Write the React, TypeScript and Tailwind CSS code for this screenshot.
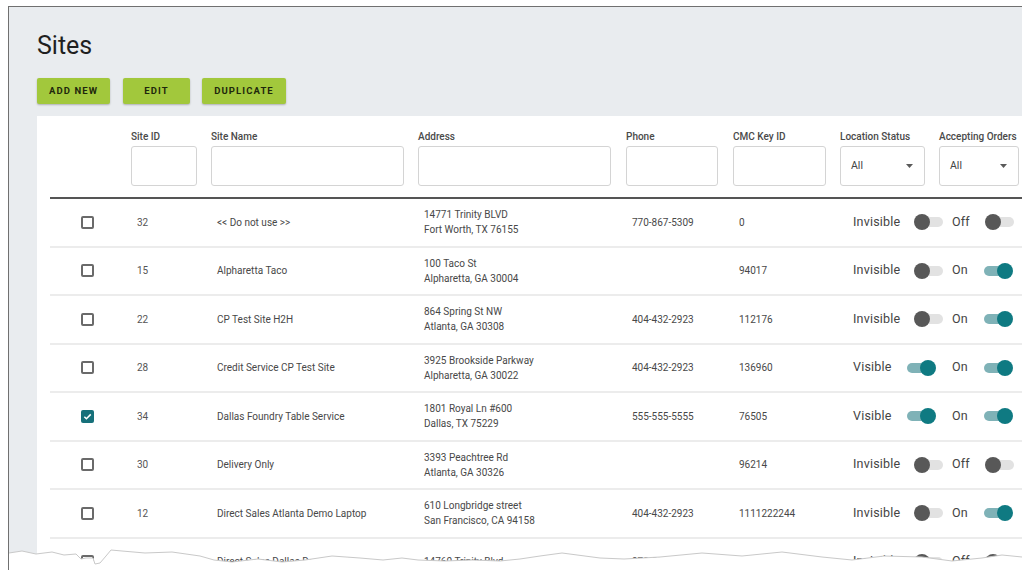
import React from 'react';

type Site = {
  id: string;
  name: string;
  street: string;
  city: string;
  phone: string;
  cmcKey: string;
  visible: boolean;
  accepting: boolean;
  checked?: boolean;
};

const sites: Site[] = [
  { id: '32', name: '<< Do not use >>', street: '14771 Trinity BLVD', city: 'Fort Worth, TX 76155', phone: '770-867-5309', cmcKey: '0', visible: false, accepting: false },
  { id: '15', name: 'Alpharetta Taco', street: '100 Taco St', city: 'Alpharetta, GA 30004', phone: '', cmcKey: '94017', visible: false, accepting: true },
  { id: '22', name: 'CP Test Site H2H', street: '864 Spring St NW', city: 'Atlanta, GA 30308', phone: '404-432-2923', cmcKey: '112176', visible: false, accepting: true },
  { id: '28', name: 'Credit Service CP Test Site', street: '3925 Brookside Parkway', city: 'Alpharetta, GA 30022', phone: '404-432-2923', cmcKey: '136960', visible: true, accepting: true },
  { id: '34', name: 'Dallas Foundry Table Service', street: '1801 Royal Ln #600', city: 'Dallas, TX 75229', phone: '555-555-5555', cmcKey: '76505', visible: true, accepting: true, checked: true },
  { id: '30', name: 'Delivery Only', street: '3393 Peachtree Rd', city: 'Atlanta, GA 30326', phone: '', cmcKey: '96214', visible: false, accepting: false },
  { id: '12', name: 'Direct Sales Atlanta Demo Laptop', street: '610 Longbridge street', city: 'San Francisco, CA 94158', phone: '404-432-2923', cmcKey: '1111222244', visible: false, accepting: true },
  { id: '14', name: 'Direct Sales Dallas Demo Laptop', street: '14760 Trinity Blvd', city: '', phone: '972-555-2305', cmcKey: '3', visible: false, accepting: false },
];

// jagged bottom edge of the clipped page
const tearEdge: [number, number][] = [
  [9, 553], [22, 551], [36, 554], [52, 552], [64, 555], [76, 554], [81, 559], [86, 558], [93, 558], [95, 564],
  [100, 563], [106, 556], [111, 550], [122, 551], [145, 553], [172, 552], [200, 556], [214, 560], [232, 562],
  [258, 559], [282, 562], [305, 560], [332, 556], [360, 558], [383, 560], [402, 558], [418, 560], [445, 561],
  [472, 560], [500, 561], [520, 559], [540, 556], [562, 553], [600, 558], [624, 559], [660, 557], [702, 553],
  [742, 556], [782, 552], [822, 557], [852, 560], [884, 556], [922, 557], [952, 561], [982, 558], [1002, 555],
  [1022, 557],
];

function Checkbox({ checked }: { checked?: boolean }) {
  if (checked) {
    return (
      <div className="w-[13px] h-[13px] rounded-[2px] bg-[#16707a] flex items-center justify-center">
        <svg width="9" height="9" viewBox="0 0 10 10">
          <path d="M1.5 5.2l2.3 2.3L8.6 2.6" fill="none" stroke="#fff" strokeWidth="1.7" />
        </svg>
      </div>
    );
  }
  return <div className="w-[13px] h-[13px] rounded-[2px] border-2 border-[#6a6a6a]" />;
}

function Toggle({ on }: { on: boolean }) {
  return (
    <div className="relative w-[30px] h-[16px] shrink-0">
      <div className={`absolute left-[1px] right-[1px] top-[3px] h-[10px] rounded-full ${on ? 'bg-[#7fb2b7]' : 'bg-[#e2e2e2]'}`} />
      <div className={`absolute top-0 w-[16px] h-[16px] rounded-full ${on ? 'right-0 bg-[#0f7a82]' : 'left-0 bg-[#585858]'}`} />
    </div>
  );
}

function Caret() {
  return (
    <svg width="7" height="4" viewBox="0 0 7 4">
      <path d="M0 0h7L3.5 4z" fill="#5a5a5a" />
    </svg>
  );
}

function FilterBox({ width }: { width: string }) {
  return <div className={`${width} h-[40px] rounded-[3px] border border-[#d4d4d4] bg-white`} />;
}

function SelectBox({ width }: { width: string }) {
  return (
    <div className={`${width} h-[40px] rounded-[3px] border border-[#d4d4d4] bg-white flex items-center justify-between pl-[10px] pr-[11px]`}>
      <span className="text-[10.5px] text-[#444]">All</span>
      <Caret />
    </div>
  );
}

function HeaderLabel({ children }: { children: React.ReactNode }) {
  return <div className="text-[10px] leading-[12px] font-medium text-[#4a4a4a] mb-[3px] whitespace-nowrap">{children}</div>;
}

export default function App() {
  return (
    <div className="relative w-[1022px] h-[570px] overflow-hidden bg-white font-['Roboto',sans-serif]">
      <div className="ml-[8px] mt-[6px] h-[564px] border-l border-t border-[#707070] bg-[#e9ecef] pl-[28px] pt-[24px]">
        <h1 className="text-[25px] leading-[30px] text-[#1f1f1f]">Sites</h1>

        <div className="flex mt-[17px]">
          {[
            { label: 'ADD NEW', w: 'w-[73px]', mr: 'mr-[13px]' },
            { label: 'EDIT', w: 'w-[67px]', mr: 'mr-[12px]' },
            { label: 'DUPLICATE', w: 'w-[84px]', mr: '' },
          ].map((b) => (
            <button
              key={b.label}
              className={`${b.w} ${b.mr} h-[26px] rounded-[2px] bg-[#a2c83c] text-[9.5px] font-bold tracking-[1.1px] text-[#1f280c] shadow-[0_1px_2px_rgba(0,0,0,0.25)]`}
            >
              {b.label}
            </button>
          ))}
        </div>

        <div className="mt-[12px] bg-white h-[460px] pl-[13px]">
          {/* filter header */}
          <div className="flex pt-[15px] pb-[11px] border-b-2 border-[#555]">
            <div className="w-[81px] shrink-0" />
            <div className="w-[80px] shrink-0">
              <HeaderLabel>Site ID</HeaderLabel>
              <FilterBox width="w-[66px]" />
            </div>
            <div className="w-[207px] shrink-0">
              <HeaderLabel>Site Name</HeaderLabel>
              <FilterBox width="w-[193px]" />
            </div>
            <div className="w-[208px] shrink-0">
              <HeaderLabel>Address</HeaderLabel>
              <FilterBox width="w-[193px]" />
            </div>
            <div className="w-[107px] shrink-0">
              <HeaderLabel>Phone</HeaderLabel>
              <FilterBox width="w-[92px]" />
            </div>
            <div className="w-[107px] shrink-0">
              <HeaderLabel>CMC Key ID</HeaderLabel>
              <FilterBox width="w-[93px]" />
            </div>
            <div className="w-[99px] shrink-0">
              <HeaderLabel>Location Status</HeaderLabel>
              <SelectBox width="w-[85px]" />
            </div>
            <div className="w-[100px] shrink-0">
              <HeaderLabel>Accepting Orders</HeaderLabel>
              <SelectBox width="w-[80px]" />
            </div>
          </div>

          {/* rows */}
          {sites.map((s) => (
            <div key={s.id} className="flex items-center h-[48.5px] border-b-2 border-[#ececec] text-[10px] text-[#484848]">
              <div className="w-[81px] shrink-0 pl-[31px]">
                <Checkbox checked={s.checked} />
              </div>
              <div className="w-[80px] shrink-0 pl-[6px] text-[#555]">{s.id}</div>
              <div className="w-[207px] shrink-0 pl-[6px] whitespace-nowrap">{s.name}</div>
              <div className="w-[208px] shrink-0 pl-[6px] leading-[15px] whitespace-nowrap">
                <div>{s.street}</div>
                {s.city && <div>{s.city}</div>}
              </div>
              <div className="w-[107px] shrink-0 pl-[6px]">{s.phone}</div>
              <div className="w-[107px] shrink-0 pl-[6px]">{s.cmcKey}</div>
              <div className="w-[99px] shrink-0 pl-[13px] flex items-center gap-[14px]">
                <span className="text-[12.5px] tracking-[0.2px] text-[#444]">{s.visible ? 'Visible' : 'Invisible'}</span>
                <Toggle on={s.visible} />
              </div>
              <div className="w-[100px] shrink-0 pl-[13px] flex items-center gap-[15px]">
                <span className="text-[12.5px] tracking-[0.2px] text-[#444]">{s.accepting ? 'On' : 'Off'}</span>
                <Toggle on={s.accepting} />
              </div>
            </div>
          ))}
        </div>
      </div>

      <svg className="absolute left-0 top-0" width="1022" height="570" viewBox="0 0 1022 570">
        <polygon
          points={[...tearEdge.map(([x, y]) => `${x},${y}`), '1022,570', '9,570'].join(' ')}
          fill="#ffffff"
        />
        <polyline
          points={tearEdge.map(([x, y]) => `${x},${y}`).join(' ')}
          fill="none"
          stroke="#c9c9c9"
          strokeWidth="1"
        />
      </svg>
    </div>
  );
}
